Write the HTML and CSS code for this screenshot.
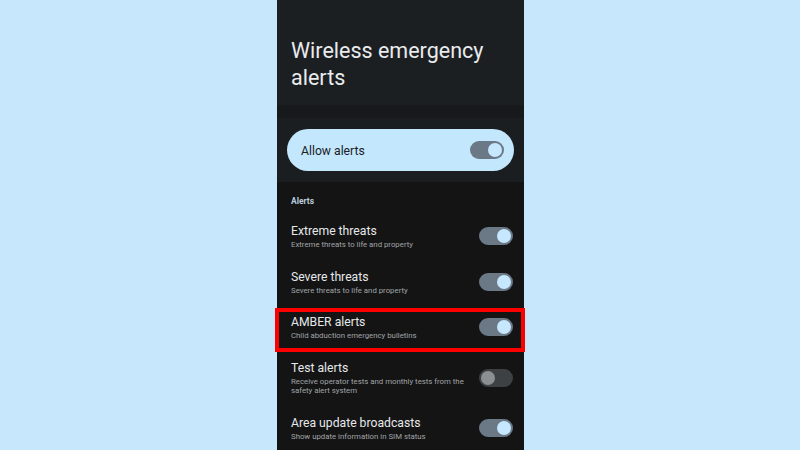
FILE: index.html
```html
<!DOCTYPE html>
<html>
<head>
<meta charset="utf-8">
<link rel="stylesheet" href="styles.css">
</head>
<body>
<div class="phone">
  <header class="header">
    <h1 class="title">Wireless emergency<br>alerts</h1>
  </header>
  <div class="strip"></div>
  <section class="master">
    <div class="card">
      <span class="card-label">Allow alerts</span>
      <span class="toggle on card-toggle"><span class="knob"></span></span>
    </div>
  </section>
  <section class="list">
    <div class="section-head">Alerts</div>
    <div class="item">
      <div class="text">
        <div class="item-title">Extreme threats</div>
        <div class="item-sub">Extreme threats to life and property</div>
      </div>
      <span class="toggle on"><span class="knob"></span></span>
    </div>
    <div class="item">
      <div class="text">
        <div class="item-title">Severe threats</div>
        <div class="item-sub">Severe threats to life and property</div>
      </div>
      <span class="toggle on"><span class="knob"></span></span>
    </div>
    <div class="item">
      <div class="text">
        <div class="item-title">AMBER alerts</div>
        <div class="item-sub">Child abduction emergency bulletins</div>
      </div>
      <span class="toggle on"><span class="knob"></span></span>
    </div>
    <div class="item">
      <div class="text">
        <div class="item-title">Test alerts</div>
        <div class="item-sub">Receive operator tests and monthly tests from the safety alert system</div>
      </div>
      <span class="toggle off"><span class="knob"></span></span>
    </div>
    <div class="item">
      <div class="text">
        <div class="item-title">Area update broadcasts</div>
        <div class="item-sub">Show update information in SIM status</div>
      </div>
      <span class="toggle on"><span class="knob"></span></span>
    </div>
  </section>
  <div class="highlight"></div>
</div>
</body>
</html>
```
FILE: styles.css
```css
html, body {
  margin: 0;
  padding: 0;
  background: #c6e7fc;
  height: 450px;
  overflow: hidden;
}
.phone {
  position: relative;
  width: 247px;
  height: 450px;
  margin-left: 277px;
  background: #141414;
  font-family: Roboto, "Noto Sans", sans-serif;
}
.header {
  height: 105px;
  background: #1c1f22;
  box-sizing: border-box;
  padding: 37px 0 0 14px;
}
.title {
  margin: 0;
  font-weight: 400;
  font-size: 21.5px;
  line-height: 27px;
  color: #e9ebed;
}
.strip {
  height: 13px;
  background: #17191b;
}
.master {
  height: 64px;
  background: #1b1e21;
  padding: 11px 10px 0 10px;
  box-sizing: border-box;
}
.card {
  height: 42px;
  border-radius: 21px;
  background: #c3e7fd;
  display: flex;
  align-items: center;
  justify-content: space-between;
  padding: 0 10px 0 14px;
}
.card-label {
  font-size: 12.2px;
  color: #1b2126;
  padding-top: 1px;
}
.list {
  padding-top: 13px;
}
.section-head {
  font-size: 8.5px;
  line-height: 12px;
  font-weight: 700;
  color: #b9cbdb;
  padding-left: 14px;
  margin-bottom: 6px;
}
.item {
  display: flex;
  align-items: center;
  justify-content: space-between;
  padding: 10px 11px 9px 14px;
}
.text {
  flex: 1;
  min-width: 0;
  padding-right: 10px;
}
.item-title {
  font-size: 12.2px;
  line-height: 16px;
  color: #e6e8ea;
}
.item-sub {
  font-size: 7.8px;
  line-height: 9.5px;
  color: #a0a4a8;
  padding-top: 1px;
}
.toggle {
  flex: none;
  width: 34px;
  height: 18px;
  border-radius: 9px;
  box-sizing: border-box;
  padding: 2px;
  display: flex;
  align-items: center;
}
.toggle .knob {
  width: 14px;
  height: 14px;
  border-radius: 50%;
}
.toggle.on {
  background: #6b7886;
  justify-content: flex-end;
}
.toggle.on .knob {
  background: #c6e7fe;
}
.toggle.off {
  background: #3e4144;
  justify-content: flex-start;
}
.toggle.off .knob {
  background: #8c8f92;
}
.card-toggle {
  background: #6b7886;
}
.card-toggle .knob {
  background: #e9f5fe;
}
.highlight {
  position: absolute;
  left: -2px;
  top: 308px;
  width: 250px;
  height: 44px;
  border: 4px solid #ff0000;
  box-sizing: border-box;
}
```
